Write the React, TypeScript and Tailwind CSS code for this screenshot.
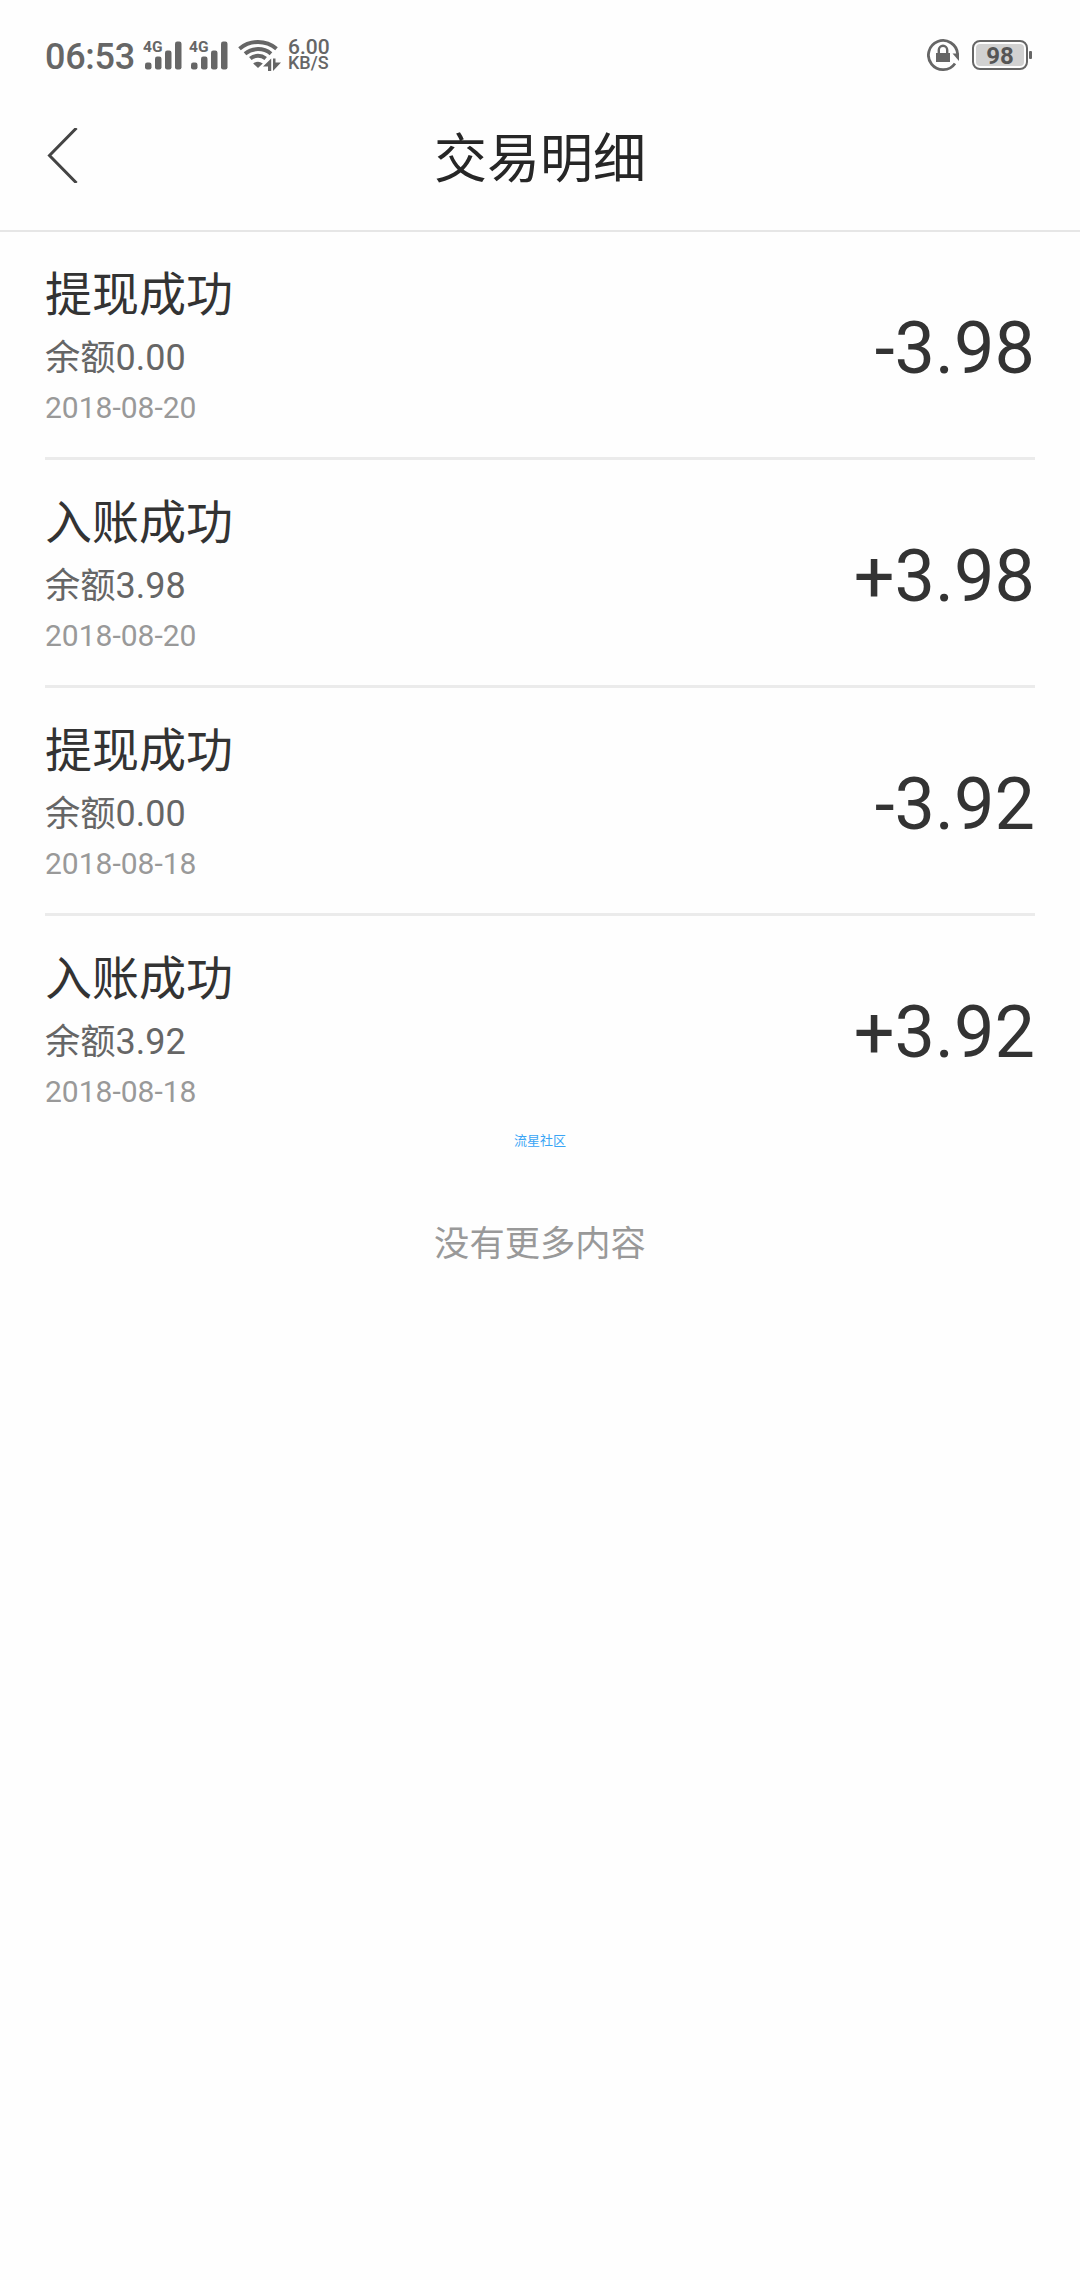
type Record = {
  title: string;
  balance: string;
  date: string;
  amount: string;
};

const records: Record[] = [
  { title: "提现成功", balance: "0.00", date: "2018-08-20", amount: "-3.98" },
  { title: "入账成功", balance: "3.98", date: "2018-08-20", amount: "+3.98" },
  { title: "提现成功", balance: "0.00", date: "2018-08-18", amount: "-3.92" },
  { title: "入账成功", balance: "3.92", date: "2018-08-18", amount: "+3.92" },
];

function SignalIcon() {
  return (
    <svg width="40" height="32" viewBox="0 0 40 32" fill="#666" className="mr-[6px] shrink-0">
      <text x="0" y="13" fontSize="15.5" fontWeight="700">
        4G
      </text>
      <rect x="2" y="23.5" width="6.5" height="7" rx="2.2" />
      <rect x="12" y="17.5" width="6.5" height="13" rx="2.2" />
      <rect x="22" y="11.5" width="6.5" height="19" rx="2.2" />
      <rect x="32" y="2.5" width="6.5" height="28" rx="2.2" />
    </svg>
  );
}

function WifiIcon() {
  return (
    <svg width="44" height="32" viewBox="0 0 44 32" fill="none" className="shrink-0">
      <g stroke="#666" strokeWidth="4">
        <path d="M1.5 9.7A29 29 0 0 1 38.5 9.7" />
        <path d="M7 14.7A20.5 20.5 0 0 1 33 14.7" />
        <path d="M12.3 19.5A12.5 12.5 0 0 1 27.7 19.5" />
      </g>
      <path d="M15.2 24.6Q20 20.8 24.8 24.6L20 29Z" fill="#666" />
      <path d="M25 27.5L33.2 19.5V32H30V27.5Z" fill="#666" />
      <path d="M35 19.5H37.5V23.5H43L35 32Z" fill="#666" />
    </svg>
  );
}

function RotationLockIcon() {
  return (
    <svg width="34" height="34" viewBox="0 0 34 34" fill="none" className="shrink-0">
      <path
        d="M28 25.5A14.6 14.6 0 1 1 30.6 16"
        stroke="#666"
        strokeWidth="2.8"
      />
      <path d="M25.5 15.5H32V23Z" fill="#666" />
      <rect x="9" y="15" width="14" height="9" fill="#666" />
      <path d="M11.8 15V12A4.2 4.2 0 0 1 20.2 12V15" stroke="#666" strokeWidth="2.4" />
    </svg>
  );
}

function Battery() {
  return (
    <div className="flex items-center">
      <div className="flex h-[30px] w-[56px] rounded-[8px] border-2 border-[#666] p-[2px]">
        <div className="flex flex-1 items-center justify-center rounded-[4px] bg-[#d1d1d1] pt-px text-[24px] leading-none font-bold text-[#555]">
          98
        </div>
      </div>
      <div className="ml-px h-[8px] w-[3px] rounded-[1px] bg-[#666]" />
    </div>
  );
}

function StatusBar() {
  return (
    <div className="flex h-[110px] items-center justify-between pr-[48px] pl-[45px] text-[#666]">
      <div className="flex items-center">
        <span className="w-[98px] pt-[3px] text-[36px] leading-[36px] font-medium tracking-[-0.3px]">
          06:53
        </span>
        <SignalIcon />
        <SignalIcon />
        <span className="w-[3px]" />
        <WifiIcon />
        <div className="ml-[6px] text-[21px] leading-[16px] font-medium">
          <p>6.00</p>
          <p className="text-[18px]">KB/S</p>
        </div>
      </div>
      <div className="flex items-center gap-[11px]">
        <RotationLockIcon />
        <Battery />
      </div>
    </div>
  );
}

function Header() {
  return (
    <header className="grid h-[122px] grid-cols-[1fr_auto_1fr] border-b-2 border-[#e6e6e6] px-[47px]">
      <svg width="31" height="55" viewBox="0 0 31 55" fill="none" className="mt-[18px]">
        <path d="M29.5 0L2.5 27.5L29.5 55" stroke="#444" strokeWidth="3" />
      </svg>
      <h1 className="mt-[24px] text-[53px] leading-[53px] text-[#262626]">交易明细</h1>
    </header>
  );
}

function RecordItem({ record }: { record: Record }) {
  return (
    <li className="flex h-[228px] items-center justify-between border-b-3 border-[#ebebeb] last:border-transparent">
      <div className="pt-[4px]">
        <h2 className="text-[47px] leading-[60px] text-[#333]">{record.title}</h2>
        <p className="mt-[8px] text-[35.3px] leading-[50px] text-[#666]">
          余额<span className="text-[36px]">{record.balance}</span>
        </p>
        <p className="mt-[5px] text-[30px] leading-[40px] text-[#999]">{record.date}</p>
      </div>
      <span className="pt-[8px] text-[72px] leading-[80px] text-[#333]">{record.amount}</span>
    </li>
  );
}

export default function App() {
  return (
    <div className="h-[2280px] w-[1080px] bg-[#fefefe] font-['Roboto','Noto_Sans_CJK_SC',sans-serif]">
      <StatusBar />
      <Header />
      <ul className="px-[45px]">
        {records.map((record, i) => (
          <RecordItem key={i} record={record} />
        ))}
      </ul>
      <footer className="flex flex-col items-center">
        <p className="-mt-[11px] text-[13px] leading-[16px] text-[#3aa5f5]">流星社区</p>
        <p className="mt-[70px] text-[35.3px] leading-[50px] text-[#999]">没有更多内容</p>
      </footer>
    </div>
  );
}
